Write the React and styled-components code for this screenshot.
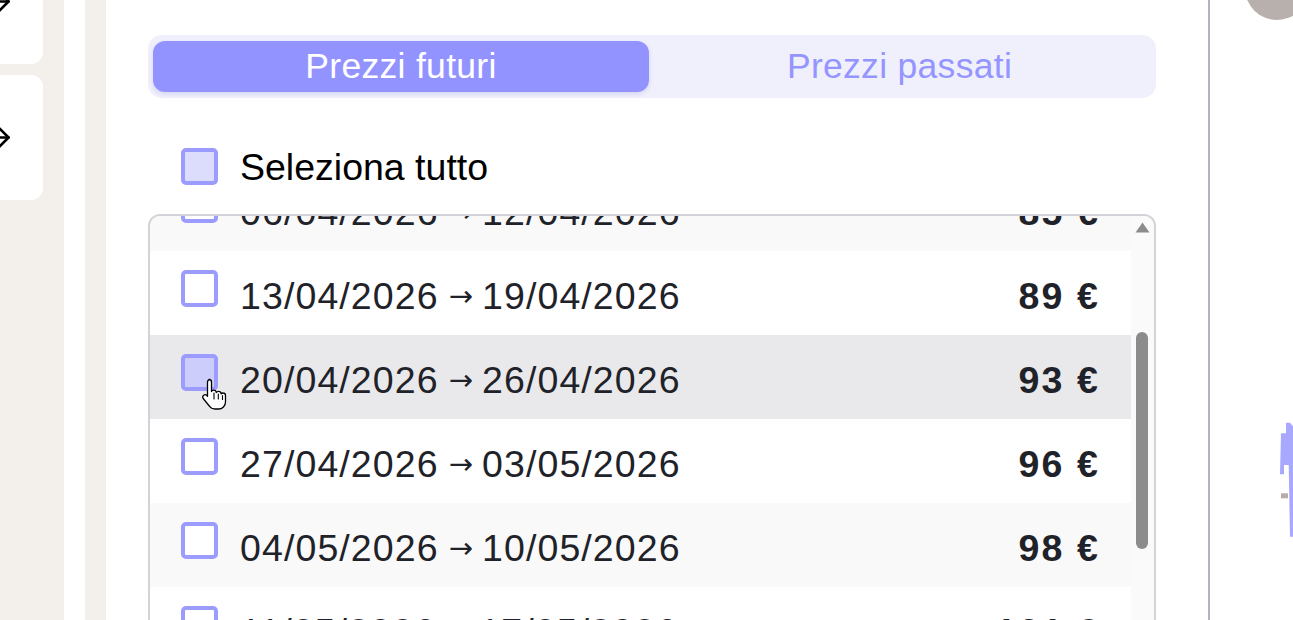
import React, { useLayoutEffect, useRef, useState } from 'react'
import styled, { createGlobalStyle } from 'styled-components'
import { ArrowRight } from 'lucide-react'

const weeks = [
  { from: '23/03/2026', to: '29/03/2026', price: 79 },
  { from: '30/03/2026', to: '05/04/2026', price: 82 },
  { from: '06/04/2026', to: '12/04/2026', price: 85 },
  { from: '13/04/2026', to: '19/04/2026', price: 89 },
  { from: '20/04/2026', to: '26/04/2026', price: 93 },
  { from: '27/04/2026', to: '03/05/2026', price: 96 },
  { from: '04/05/2026', to: '10/05/2026', price: 98 },
  { from: '11/05/2026', to: '17/05/2026', price: 101 },
  { from: '18/05/2026', to: '24/05/2026', price: 104 },
  { from: '25/05/2026', to: '31/05/2026', price: 107 },
  { from: '01/06/2026', to: '07/06/2026', price: 110 },
  { from: '08/06/2026', to: '14/06/2026', price: 112 },
  { from: '15/06/2026', to: '21/06/2026', price: 115 },
]

const HOVERED = 4
const ROW_H = 84
const VIEW_H = 504
const ARROW_H = 23

const HandCursor = () => (
  <svg width="26" height="34" viewBox="0 0 26 34">
    <path
      d="M8 2.5c1.4 0 2.5 1.1 2.5 2.5v9.5c.5-.9 1.5-1.4 2.5-1.3 1.3.1 2.2 1.1 2.3 2.3.5-.8 1.5-1.3 2.5-1.2 1.3.1 2.3 1.2 2.3 2.5.5-.6 1.3-.9 2.1-.8 1.3.1 2.3 1.2 2.3 2.5V25c0 3.9-3.1 7-7 7h-3.5c-2.3 0-4.4-1.1-5.7-3L2.2 21.5c-.7-1-.5-2.4.5-3.2.9-.7 2.2-.7 3 .1l.8.8V5c0-1.4 1.1-2.5 2.5-2.5z"
      fill="#fff"
      stroke="#000"
      strokeWidth="1.3"
      strokeLinejoin="round"
    />
    <path d="M13 16v6M17.3 17v5M21.5 18.5v4" stroke="#000" strokeWidth="1.1" strokeLinecap="round" />
  </svg>
)

const App = () => {
  const scrollRef = useRef(null)
  const [scrollTop, setScrollTop] = useState(217)

  useLayoutEffect(() => {
    if (scrollRef.current) scrollRef.current.scrollTop = 217
  }, [])

  const contentH = weeks.length * ROW_H
  const trackLen = VIEW_H - ARROW_H * 2
  const thumbH = Math.round((trackLen * VIEW_H) / contentH) + 6
  const thumbTop = Math.round((trackLen * scrollTop) / contentH) + 2

  return (
    <>
      <GlobalStyle />
      <Page>
        <SideNav>
          <NavCard $first>
            <ArrowRight size={31} strokeWidth={2} color="#000" />
          </NavCard>
          <NavCard>
            <ArrowRight size={31} strokeWidth={2} color="#000" />
          </NavCard>
        </SideNav>
        <Gutter />
        <Rail />

        <MainPanel>
          <Tabs>
            <Tab $active>Prezzi futuri</Tab>
            <Tab>Prezzi passati</Tab>
          </Tabs>

          <SelectAll>
            <Check $fill="#dcdcfc" />
            <SelectLabel>Seleziona tutto</SelectLabel>
          </SelectAll>

          <ListBox>
            <Scroller ref={scrollRef} onScroll={e => setScrollTop(e.currentTarget.scrollTop)}>
              {weeks.map((w, i) => (
                <Row key={w.from} $bg={i === HOVERED ? '#e9e9eb' : i % 2 === 0 ? '#f9f9f9' : '#ffffff'}>
                  <Check $fill={i === HOVERED ? '#cdcdfc' : '#ffffff'} $shift />
                  <RangeText>
                    {w.from}
                    <ArrowGlyph>→</ArrowGlyph>
                    {w.to}
                  </RangeText>
                  <Price>{w.price} €</Price>
                  {i === HOVERED && (
                    <Cursor>
                      <HandCursor />
                    </Cursor>
                  )}
                </Row>
              ))}
            </Scroller>
            <ScrollTrack>
              <svg width="23" height={ARROW_H} viewBox="0 0 23 23">
                <path d="M4.5 16.5 L11.5 6.5 L18.5 16.5 Z" fill="#8c8c8c" />
              </svg>
              <Thumb style={{ marginTop: thumbTop, height: thumbH }} />
            </ScrollTrack>
          </ListBox>
        </MainPanel>

        <Divider />

        <RightPane>
          <Avatar />
          <ChartSliver width="16" height="120" viewBox="0 0 16 120">
            <rect x="3" y="73.3" width="7" height="5" fill="#b8aca8" />
            <polygon
              points="2,54.3 3,13.3 8,13.3 8,2.7 12,2.7 15.3,6.7 15.3,116.7 12,116.7 10.7,45 6,45 6,54.3"
              fill="#a8a8ff"
            />
          </ChartSliver>
        </RightPane>
      </Page>
    </>
  )
}

export default App

const GlobalStyle = createGlobalStyle`
  html, body {
    margin: 0;
    height: 100%;
    overflow: hidden;
    background: #ffffff;
    font-family: "Liberation Sans", Arial, sans-serif;
  }
`

const Page = styled.div`
  display: flex;
  height: 620px;
  overflow: hidden;
`

const SideNav = styled.div`
  width: 64px;
  flex-shrink: 0;
  background-color: #f3f0ec;
  display: flex;
  flex-direction: column;
  gap: 11px;
`

const NavCard = styled.div`
  width: 43px;
  height: 125px;
  margin-top: ${p => (p.$first ? '-61px' : '0')};
  background-color: #ffffff;
  border-radius: 0 12px 12px 0;
  display: flex;
  align-items: center;
  overflow: hidden;

  svg {
    flex-shrink: 0;
    margin-left: -16.5px;
  }
`

const Gutter = styled.div`
  width: 21px;
  flex-shrink: 0;
  background-color: #ffffff;
`

const Rail = styled.div`
  width: 21px;
  flex-shrink: 0;
  background-color: #f3f0ec;
`

const MainPanel = styled.div`
  width: 1102px;
  flex-shrink: 0;
  box-sizing: border-box;
  padding: 35px 0 0 42px;
  background-color: #ffffff;
`

const Tabs = styled.div`
  width: 1008px;
  height: 63px;
  box-sizing: border-box;
  padding: 6px 6px 6px 5px;
  background-color: #f0f0fd;
  border-radius: 14px;
  display: grid;
  grid-template-columns: 496px 1fr;
`

const Tab = styled.div`
  display: flex;
  align-items: center;
  justify-content: center;
  border-radius: 12px;
  font-size: 35.5px;
  letter-spacing: 0.3px;
  color: ${p => (p.$active ? '#ffffff' : '#9595ff')};
  background-color: ${p => (p.$active ? '#9393ff' : 'transparent')};
  box-shadow: ${p => (p.$active ? '0 2px 5px rgba(90, 90, 200, 0.18)' : 'none')};
`

const SelectAll = styled.div`
  height: 37px;
  display: flex;
  align-items: center;
  gap: 22px;
  margin: 50px 0 29px 33px;
`

const Check = styled.div`
  width: 37px;
  height: 37px;
  flex-shrink: 0;
  box-sizing: border-box;
  border: 4px solid #9c9cff;
  border-radius: 5px;
  background-color: ${p => p.$fill};
  margin-top: ${p => (p.$shift ? '-10px' : '0')};
`

const SelectLabel = styled.span`
  font-size: 37.5px;
  line-height: 1;
  padding-top: 2px;
  color: #000000;
`

const ListBox = styled.div`
  width: 1008px;
  box-sizing: border-box;
  border: 2px solid #d2d2d8;
  border-radius: 12px;
  overflow: hidden;
  display: flex;
`

const Scroller = styled.div`
  flex: 1;
  height: ${VIEW_H}px;
  overflow-y: scroll;
  scrollbar-width: none;

  &::-webkit-scrollbar {
    display: none;
  }
`

const ScrollTrack = styled.div`
  width: 23px;
  height: ${VIEW_H}px;
  flex-shrink: 0;
  background-color: #fafafa;
  display: flex;
  flex-direction: column;

  svg {
    display: block;
    flex-shrink: 0;
  }
`

const Thumb = styled.div`
  width: 12px;
  margin-left: 5px;
  border-radius: 6px;
  background-color: #8c8c8c;
  flex-shrink: 0;
`

const Row = styled.div`
  position: relative;
  height: ${ROW_H}px;
  box-sizing: border-box;
  padding: 0 33px 0 31px;
  display: flex;
  align-items: center;
  gap: 22px;
  background-color: ${p => p.$bg};
`

const RangeText = styled.span`
  flex: 1;
  padding-top: 6px;
  font-size: 37.5px;
  letter-spacing: 1.1px;
  color: #1f2329;
  white-space: nowrap;
  display: flex;
  align-items: center;
`

const ArrowGlyph = styled.span`
  font-family: "DejaVu Sans", sans-serif;
  font-size: 29px;
  letter-spacing: 0;
  margin: 0 9px 0 10px;
  line-height: 1;
`

const Price = styled.span`
  padding-top: 6px;
  font-size: 37.5px;
  font-weight: 700;
  letter-spacing: 2.2px;
  margin-right: -2.2px;
  color: #1f2329;
  white-space: nowrap;
`

const Cursor = styled.div`
  position: absolute;
  left: 51px;
  top: 42px;
  pointer-events: none;
`

const Divider = styled.div`
  width: 2px;
  flex-shrink: 0;
  background-color: #b0b4be;
`

const RightPane = styled.div`
  flex: 1;
  display: flex;
  flex-direction: column;
  background-color: #ffffff;
`

const Avatar = styled.div`
  width: 64px;
  height: 64px;
  margin: -44px 0 0 35px;
  border-radius: 50%;
  flex-shrink: 0;
  background-color: #b8b0ac;
`

const ChartSliver = styled.svg`
  margin: 400px 0 0 68px;
  display: block;
  flex-shrink: 0;
`
